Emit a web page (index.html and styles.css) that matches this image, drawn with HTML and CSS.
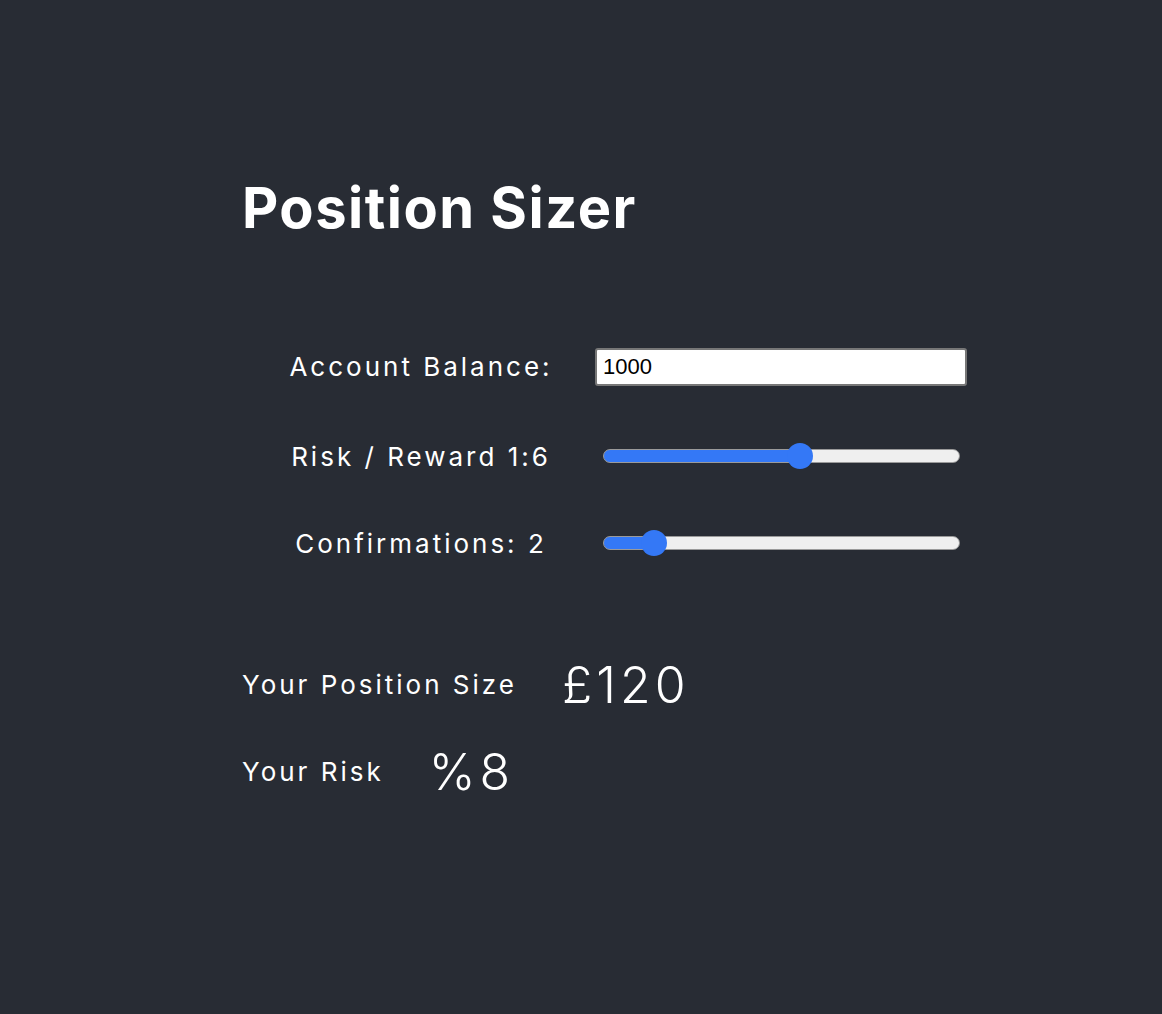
FILE: index.html
```html
<!DOCTYPE html>
<html lang="en">
<head>
    <meta charset="UTF-8">
    <meta name="viewport" content="width=device-width, initial-scale=1.0">
    <title>Position Sizer</title>
    <link rel="stylesheet" href="styles.css">
</head>
<body>
    <div class="app">
        <h1 class="title">Position Sizer</h1>

        <div class="form">
            <label class="label" for="balance">Account Balance:</label>
            <div class="field">
                <input class="balance" type="text" id="balance" value="1000">
            </div>

            <label class="label" for="ratio">Risk / Reward 1:6</label>
            <div class="field">
                <input class="slider" type="range" id="ratio" min="1" max="10" value="6" style="--fill: 55.6%">
            </div>

            <label class="label" for="confirmations">Confirmations: 2</label>
            <div class="field">
                <input class="slider" type="range" id="confirmations" min="1" max="10" value="2" style="--fill: 11.1%">
            </div>
        </div>

        <div class="results">
            <div class="result">
                <span class="result-label">Your Position Size</span>
                <span class="result-value">£120</span>
            </div>
            <div class="result">
                <span class="result-label">Your Risk</span>
                <span class="result-value">%8</span>
            </div>
        </div>
    </div>
</body>
</html>
```

FILE: styles.css
```css
body {
    margin: 0;
    background-color: #282c34;
    color: #fff;
    font-family: Inter, "Noto Sans", sans-serif;
}
.app {
    padding: 174px 0 0 242px;
}
.title {
    margin: 0;
    font-size: 56px;
    font-weight: 700;
    letter-spacing: 1.5px;
}
.form {
    display: grid;
    grid-template-columns: 276px 372px;
    grid-template-rows: 93px 87px 87px;
    column-gap: 36px;
    align-items: center;
    margin: 78px 0 0 41px;
}
.label {
    font-size: 26px;
    letter-spacing: 3px;
    text-align: center;
    white-space: nowrap;
}
.balance {
    box-sizing: border-box;
    width: 372px;
    height: 38px;
    padding: 0 6px;
    font-family: "Liberation Sans", Arial, sans-serif;
    font-size: 22px;
    color: #000;
    background: #fff;
    border: 2px solid #777;
    border-radius: 3px;
}
.slider {
    -webkit-appearance: none;
    appearance: none;
    box-sizing: border-box;
    width: 357px;
    height: 14px;
    margin: 0 0 0 8px;
    border: 1px solid #9a9a9a;
    border-radius: 7px;
    background: linear-gradient(to right, #3478f6 var(--fill), #efefef var(--fill));
}
.slider::-webkit-slider-thumb {
    -webkit-appearance: none;
    width: 26px;
    height: 26px;
    border-radius: 50%;
    background: #3478f6;
    border: none;
}
.results {
    margin-top: 54px;
}
.result {
    display: flex;
    align-items: center;
    gap: 45px;
    height: 87px;
}
.result-label {
    font-size: 26px;
    letter-spacing: 3px;
}
.result-value {
    font-size: 50px;
    font-weight: 300;
    letter-spacing: 4px;
}
```
